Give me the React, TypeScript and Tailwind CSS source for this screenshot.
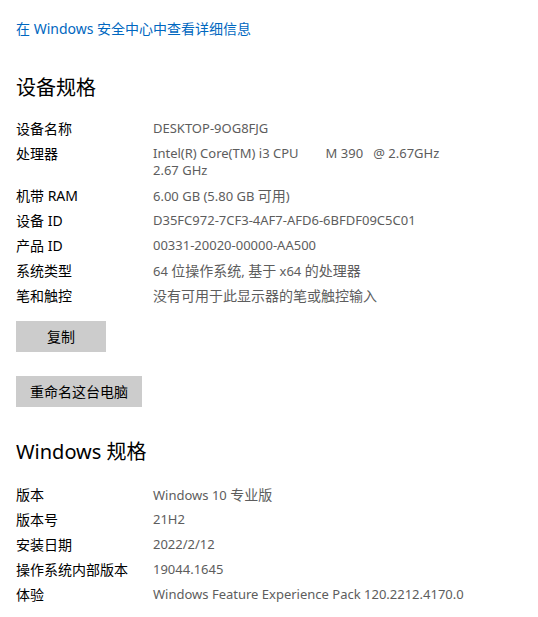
import React from "react";

const font = { fontFamily: '"Noto Sans", "Noto Sans CJK SC", sans-serif' };

const deviceSpecs: { label: string; value: string[] }[] = [
  { label: "设备名称", value: ["DESKTOP-9OG8FJG"] },
  { label: "处理器", value: ["Intel(R) Core(TM) i3 CPU        M 390   @ 2.67GHz", "2.67 GHz"] },
  { label: "机带 RAM", value: ["6.00 GB (5.80 GB 可用)"] },
  { label: "设备 ID", value: ["D35FC972-7CF3-4AF7-AFD6-6BFDF09C5C01"] },
  { label: "产品 ID", value: ["00331-20020-00000-AA500"] },
  { label: "系统类型", value: ["64 位操作系统, 基于 x64 的处理器"] },
  { label: "笔和触控", value: ["没有可用于此显示器的笔或触控输入"] },
];

const winSpecs: { label: string; value: string[] }[] = [
  { label: "版本", value: ["Windows 10 专业版"] },
  { label: "版本号", value: ["21H2"] },
  { label: "安装日期", value: ["2022/2/12"] },
  { label: "操作系统内部版本", value: ["19044.1645"] },
  { label: "体验", value: ["Windows Feature Experience Pack 120.2212.4170.0"] },
];

// values mix latin and chinese; the chinese glyphs in the shot are a bit larger
const Mixed = ({ text }: { text: string }) => (
  <>
    {text.split(/([\u4e00-\u9fff]+)/).map((part, i) =>
      /[\u4e00-\u9fff]/.test(part) ? (
        <span key={i} className="text-[14px]">
          {part}
        </span>
      ) : (
        <span key={i}>{part}</span>
      )
    )}
  </>
);

const SpecRows = ({ rows }: { rows: { label: string; value: string[] }[] }) => (
  <div className="flex flex-col gap-[8px]">
    {rows.map((row) => (
      <div key={row.label} className="flex leading-[17px]">
        <div className="w-[137px] shrink-0 text-[14px] text-black">{row.label}</div>
        <div className="text-[13px] text-[#5d5d5d]">
          {row.value.map((line) => (
            <div key={line} className="whitespace-pre h-[17px]">
              <Mixed text={line} />
            </div>
          ))}
        </div>
      </div>
    ))}
  </div>
);

export default function App() {
  return (
    <div className="w-[538px] h-[617px] bg-white px-[16px] pt-[19px] overflow-hidden" style={font}>
      <div className="text-[14px] leading-[20px] text-[#0067c0]">在 Windows 安全中心中查看详细信息</div>

      <h2 className="mt-[35px] text-[20px] leading-[28px] text-black">设备规格</h2>

      <div className="mt-[18px]">
        <SpecRows rows={deviceSpecs} />
      </div>

      <div className="mt-[17px] flex flex-col items-start gap-[24px]">
        <button className="w-[90px] h-[31px] bg-[#cccccc] text-[14px] text-black">复制</button>
        <button className="h-[31px] px-[14px] bg-[#cccccc] text-[14px] text-black">重命名这台电脑</button>
      </div>

      <h2 className="mt-[31px] text-[20px] leading-[28px] text-black">Windows 规格</h2>

      <div className="mt-[20px]">
        <SpecRows rows={winSpecs} />
      </div>
    </div>
  );
}
